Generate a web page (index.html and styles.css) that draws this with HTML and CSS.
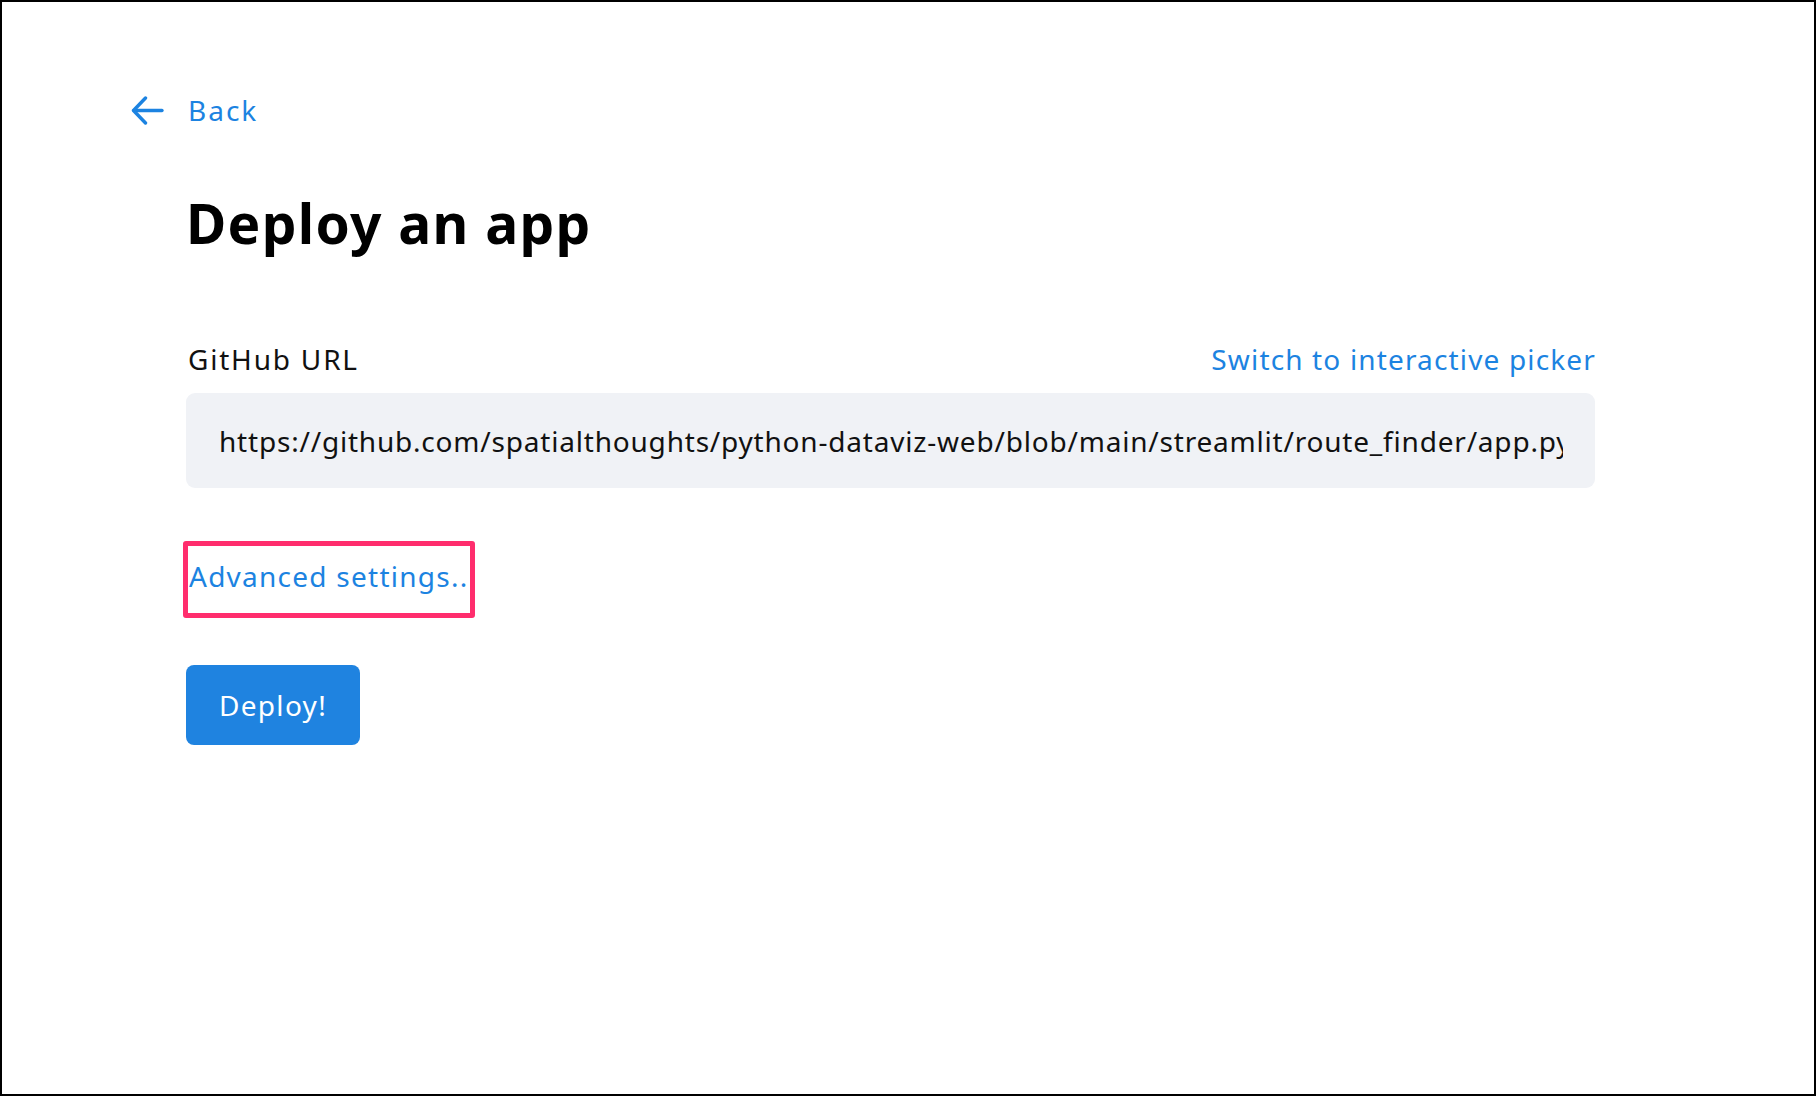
FILE: index.html
```html
<!DOCTYPE html>
<html lang="en">
<head>
<meta charset="utf-8">
<title>Deploy an app</title>
<link rel="stylesheet" href="styles.css">
</head>
<body>
<div class="frame">
  <div class="page">
    <a class="back" href="#">
      <svg class="back-icon" width="33" height="29" viewBox="0 0 33 29" fill="none" stroke="currentColor" stroke-width="3.4" stroke-linecap="round" stroke-linejoin="round">
        <path d="M31 14.5H3"/>
        <path d="M14.5 2L2.5 14.5L14.5 27"/>
      </svg>
      <span class="back-text">Back</span>
    </a>
    <div class="content">
      <h1 class="title">Deploy an app</h1>
      <div class="label-row">
        <span class="label">GitHub URL</span>
        <a class="link switch" href="#">Switch to interactive picker</a>
      </div>
      <div class="input">
        <span class="input-text">https://github.com/spatialthoughts/python-dataviz-web/blob/main/streamlit/route_finder/app.py</span>
      </div>
      <div class="advanced">
        <a class="link adv-link" href="#">Advanced settings...</a>
      </div>
      <button class="deploy">Deploy!</button>
    </div>
  </div>
</div>
</body>
</html>
```
FILE: styles.css
```css
html, body {
  margin: 0;
  padding: 0;
  background: #fff;
}
body {
  font-family: "Noto Sans", "Open Sans", sans-serif;
  color: #111;
}
.frame {
  box-sizing: border-box;
  width: 1816px;
  height: 1096px;
  border: 2px solid #000;
  overflow: hidden;
}
.page {
  padding: 90px 0 0 127px;
}
.back {
  display: flex;
  align-items: center;
  gap: 24px;
  margin-left: 2px;
  color: #1c83e1;
  text-decoration: none;
  font-size: 28px;
  line-height: 36px;
  width: max-content;
}
.back-text {
  letter-spacing: 2px;
}
.back-icon {
  display: block;
}
.content {
  margin-left: 57px;
  width: 1409px;
}
.title {
  margin: 62px 0 0 0;
  font-size: 55px;
  line-height: 65px;
  font-weight: 700;
  color: #000;
  letter-spacing: 1.3px;
}
.label-row {
  margin-top: 86px;
  display: flex;
  justify-content: space-between;
  align-items: baseline;
  font-size: 28px;
  line-height: 36px;
  padding-left: 2px;
}
.label {
  color: #111;
  letter-spacing: 1.8px;
}
.switch {
  letter-spacing: 1.15px;
  margin-right: -1px;
}
.link {
  color: #1c83e1;
  text-decoration: none;
}
.input {
  margin-top: 16px;
  height: 95px;
  background: #f0f2f6;
  border-radius: 9px;
  padding: 0 32px 0 33px;
  display: flex;
  align-items: center;
  overflow: hidden;
}
.input-text {
  font-size: 28px;
  color: #111;
  white-space: nowrap;
  overflow: hidden;
  display: block;
  width: 100%;
  letter-spacing: 0.8px;
}
.advanced {
  position: relative;
  margin: 53px 0 0 -3px;
  box-sizing: border-box;
  width: 292px;
  height: 77px;
  padding: 0 5px 8px 5px;
  display: flex;
  align-items: center;
  white-space: nowrap;
}
.advanced::after {
  content: "";
  position: absolute;
  inset: 0;
  border: 5px solid #ff2d6d;
  border-radius: 3px;
}
.adv-link {
  display: block;
  overflow: hidden;
  width: 100%;
  font-size: 28px;
  line-height: 36px;
  margin-left: 1px;
  letter-spacing: 1.25px;
}
.deploy {
  margin-top: 47px;
  display: block;
  width: 174px;
  height: 80px;
  border: none;
  border-radius: 8px;
  background: #1f83e0;
  color: #fff;
  font-family: inherit;
  font-size: 28px;
  letter-spacing: 1.3px;
  padding: 0;
}
```
